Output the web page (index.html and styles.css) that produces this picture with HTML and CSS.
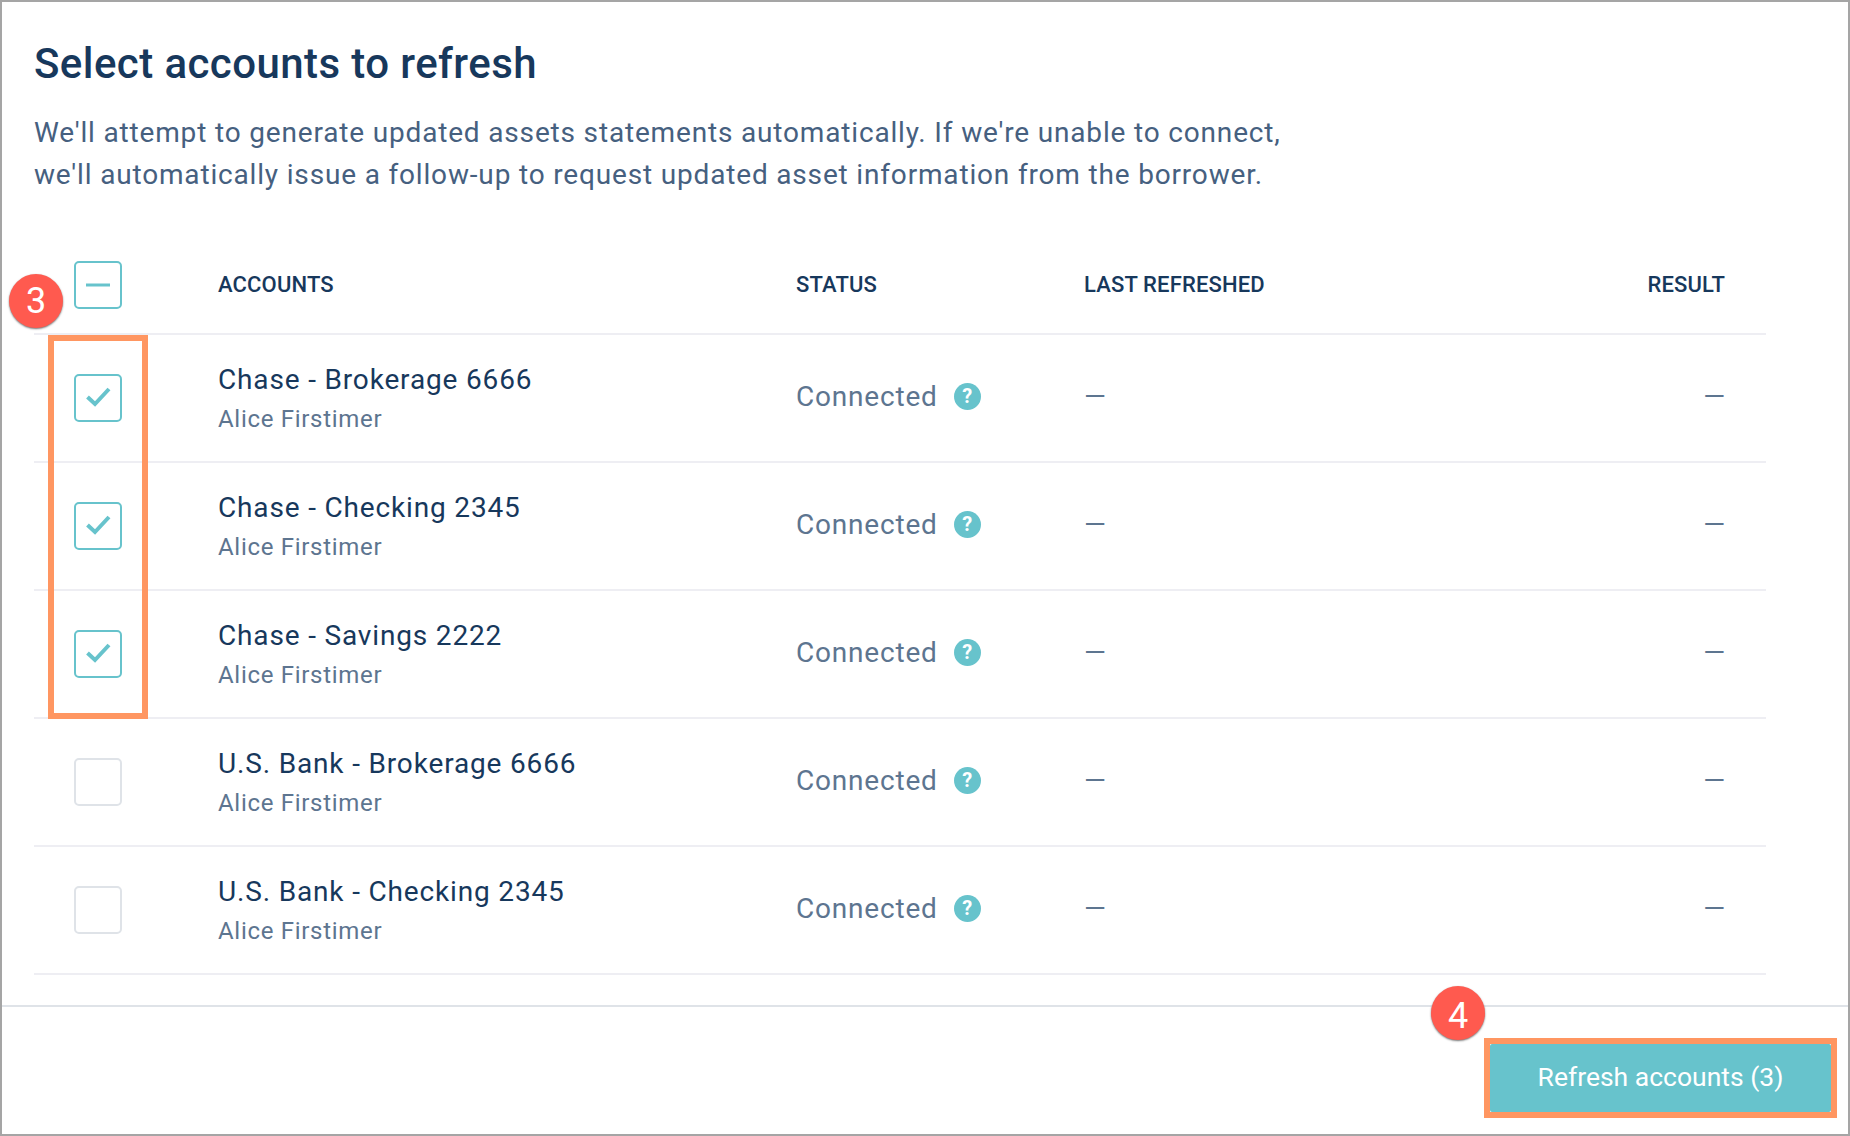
FILE: index.html
```html
<!DOCTYPE html>
<html lang="en">
<head>
<meta charset="utf-8">
<title>Select accounts to refresh</title>
<link rel="stylesheet" href="styles.css">
</head>
<body>
<div class="frame">
  <main class="content">
    <h1 class="title">Select accounts to refresh</h1>
    <p class="intro">We'll attempt to generate updated assets statements automatically. If we're unable to connect,<br>we'll automatically issue a follow-up to request updated asset information from the borrower.</p>
    <div class="table">
      <div class="row head">
        <div><span class="box on"><svg viewBox="0 0 48 48" class="ico"><path d="M12 24H36" class="stroke thin"/></svg></span></div>
        <div>ACCOUNTS</div><div>STATUS</div><div>LAST REFRESHED</div><div class="end">RESULT</div>
      </div>
      <div class="row">
        <div><span class="box on"><svg viewBox="0 0 48 48" class="ico"><path d="M13.5 23L21 30L35 15" class="stroke"/></svg></span></div>
        <div><div class="name">Chase - Brokerage 6666</div><div class="owner">Alice Firstimer</div></div>
        <div class="status">Connected<span class="help">?</span></div><div class="dash">—</div><div class="dash end">—</div>
      </div>
      <div class="row">
        <div><span class="box on"><svg viewBox="0 0 48 48" class="ico"><path d="M13.5 23L21 30L35 15" class="stroke"/></svg></span></div>
        <div><div class="name">Chase - Checking 2345</div><div class="owner">Alice Firstimer</div></div>
        <div class="status">Connected<span class="help">?</span></div><div class="dash">—</div><div class="dash end">—</div>
      </div>
      <div class="row">
        <div><span class="box on"><svg viewBox="0 0 48 48" class="ico"><path d="M13.5 23L21 30L35 15" class="stroke"/></svg></span></div>
        <div><div class="name">Chase - Savings 2222</div><div class="owner">Alice Firstimer</div></div>
        <div class="status">Connected<span class="help">?</span></div><div class="dash">—</div><div class="dash end">—</div>
      </div>
      <div class="row">
        <div><span class="box"></span></div>
        <div><div class="name">U.S. Bank - Brokerage 6666</div><div class="owner">Alice Firstimer</div></div>
        <div class="status">Connected<span class="help">?</span></div><div class="dash">—</div><div class="dash end">—</div>
      </div>
      <div class="row">
        <div><span class="box"></span></div>
        <div><div class="name">U.S. Bank - Checking 2345</div><div class="owner">Alice Firstimer</div></div>
        <div class="status">Connected<span class="help">?</span></div><div class="dash">—</div><div class="dash end">—</div>
      </div>
      <div class="highlight"></div>
      <div class="badge badge-three">3</div>
    </div>
  </main>
  <footer class="footer">
    <div class="cta-wrap">
      <button class="cta">Refresh accounts (3)</button>
      <div class="badge badge-four">4</div>
    </div>
  </footer>
</div>
</body>
</html>
```
FILE: styles.css
```css
* { box-sizing: border-box; }
html, body { margin: 0; padding: 0; background: #fff; }
body { font-family: Roboto, "Liberation Sans", sans-serif; }
.frame {
  width: 1850px; height: 1136px;
  border: 2px solid #a5a5a5;
  display: flex; flex-direction: column;
}
.content { flex: 1; padding: 0 80px 0 32px; }
.title {
  margin: 0; padding-top: 38px;
  font-size: 42px; line-height: 48px; font-weight: 500; letter-spacing: 0.42px;
  color: #17385c;
}
.intro {
  margin: 24px 0 0;
  font-size: 28px; line-height: 42px; letter-spacing: 0.83px;
  color: #46607f;
}
.table { position: relative; margin-top: 50px; width: 1732px; }
.row {
  display: grid;
  grid-template-columns: 184px 578px 288px 1fr auto;
  align-items: center;
  height: 128px;
  padding-right: 41px;
  border-bottom: 2px solid #eeeef3;
}
.head {
  height: 89px;
  padding-bottom: 10px;
  font-size: 22px; font-weight: 500; letter-spacing: 0.15px; color: #17385c;
}
.box {
  display: block; width: 48px; height: 48px;
  margin-left: 40px;
  border: 2px solid #dfe3e8; border-radius: 5px;
  position: relative;
}
.box.on { border-color: #67c3cc; }
.ico { position: absolute; left: -2px; top: -2px; width: 48px; height: 48px; }
.stroke { fill: none; stroke: #67c3cc; stroke-width: 4; }
.thin { stroke-width: 3; }
.name { font-size: 28px; line-height: 36px; letter-spacing: 0.84px; color: #17385c; margin-top: -1px; }
.owner { font-size: 24px; line-height: 30px; margin-top: 6px; letter-spacing: 0.7px; color: #5d7590; }
.status {
  display: flex; align-items: center;
  margin-top: -4px;
  font-size: 28px; letter-spacing: 0.8px; color: #5d7590;
}
.help {
  width: 27px; height: 27px; margin-left: 16px; border-radius: 50%;
  background: #67c3cc; color: #fff;
  font-size: 20px; font-weight: 700; letter-spacing: 0; line-height: 27px; text-align: center;
}
.dash { margin-top: -4px; font-size: 28px; color: #5d7590; }
.end { text-align: right; }
.highlight {
  position: absolute; left: 14px; top: 89px;
  width: 100px; height: 384px;
  border: 6px solid #ff9661;
}
.badge {
  position: absolute;
  width: 54px; height: 54px; border-radius: 50%;
  background: #ff5a4f; color: #fff;
  box-shadow: 0 1px 2px rgba(0,0,0,.55);
  font-size: 36px; line-height: 54px; text-align: center;
}
.badge-three { left: -25px; top: 28px; }
.footer {
  height: 129px;
  border-top: 2px solid #dfe3e8;
  display: flex; justify-content: flex-end; align-items: flex-start;
  padding: 31px 11px 0 0;
}
.cta-wrap { position: relative; border: 6px solid #ff9661; width: 353px; height: 80px; }
.cta {
  display: block; width: 100%; height: 100%;
  border: 0; border-radius: 2px; padding: 0 0 4px;
  background: #67c3cc; color: #fff;
  font-family: Roboto, "Liberation Sans", sans-serif;
  font-size: 26.5px;
}
.badge-four { left: -59px; top: -58px; line-height: 60px; }
```
